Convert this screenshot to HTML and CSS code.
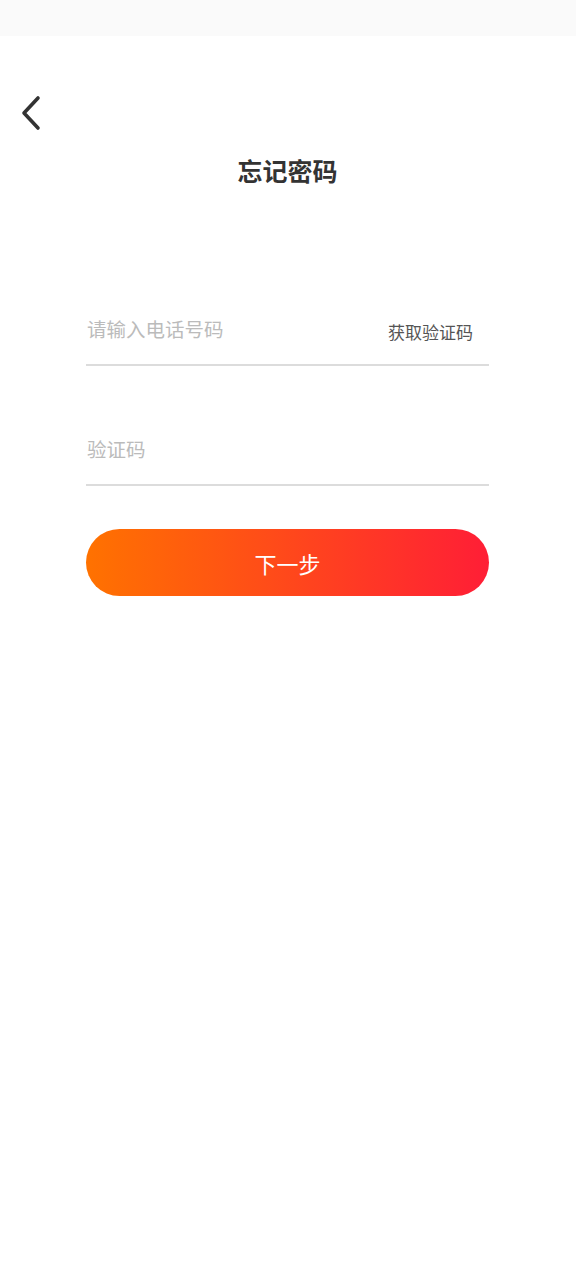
FILE: index.html
```html
<!DOCTYPE html>
<html lang="zh-CN">
<head>
    <meta charset="UTF-8">
    <meta name="viewport" content="width=device-width, initial-scale=1.0">
    <title>忘记密码</title>
    <link rel="stylesheet" href="styles.css">
</head>
<body>
    <div class="status-bar"></div>
    <div class="page">
        <div class="nav">
            <a href="#" class="back-btn">
                <svg width="22" height="36" viewBox="0 0 22 36">
                    <path d="M18 3 L4 18 L18 33" fill="none" stroke="#333" stroke-width="3.6" stroke-linecap="round" stroke-linejoin="round"/>
                </svg>
            </a>
        </div>
        <h1 class="title">忘记密码</h1>
        <form class="reset-form">
            <div class="form-row">
                <input type="tel" placeholder="请输入电话号码">
                <a href="#" class="get-code">获取验证码</a>
            </div>
            <div class="form-row">
                <input type="text" placeholder="验证码">
            </div>
            <button type="submit" class="next-button">下一步</button>
        </form>
    </div>
</body>
</html>
```

FILE: styles.css
```css
* {
    margin: 0;
    padding: 0;
    box-sizing: border-box;
    font-family: 'Noto Sans CJK SC', 'Noto Sans', sans-serif;
}

body {
    background-color: #fff;
    width: 576px;
    height: 1280px;
}

.status-bar {
    height: 36px;
    background-color: #fafafa;
}

.page {
    padding: 0 87px 0 86px;
}

.nav {
    height: 100px;
    margin-left: -86px;
    padding: 59px 0 0 20px;
}

.back-btn {
    display: block;
    width: 22px;
    height: 36px;
}

.title {
    text-align: center;
    font-size: 25px;
    font-weight: 700;
    color: #333;
    line-height: 36px;
    margin-top: 16px;
}

.reset-form {
    margin-top: 110px;
}

.form-row {
    display: flex;
    align-items: center;
    height: 68px;
    border-bottom: 2px solid #dcdcdc;
    margin-bottom: 52px;
    padding-bottom: 6px;
}

.form-row + .form-row {
    margin-bottom: 43px;
}

.form-row input {
    flex: 1;
    min-width: 0;
    border: none;
    outline: none;
    font-size: 19.5px;
    color: #333;
    background: transparent;
    padding-left: 1px;
}

.form-row input::placeholder {
    color: #bbb;
}

.get-code {
    font-size: 17px;
    color: #555;
    text-decoration: none;
    margin-right: 16px;
    margin-top: 6px;
}

.next-button {
    display: block;
    width: 100%;
    height: 67px;
    border: none;
    border-radius: 34px;
    background: linear-gradient(90deg, #ff7200, #ff1e36);
    color: #fff;
    font-size: 22px;
    cursor: pointer;
}
```
